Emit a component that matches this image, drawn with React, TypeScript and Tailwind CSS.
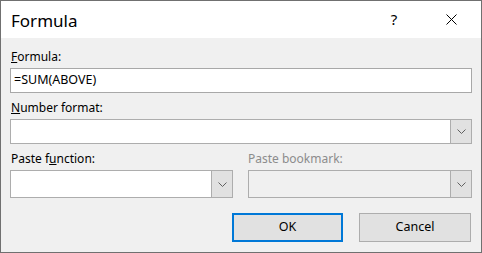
import React from "react";

function Chevron() {
  return (
    <svg width="9" height="5" viewBox="0 0 9 5" className="block">
      <path d="M0.5 0.5 L4.5 4.5 L8.5 0.5" fill="none" stroke="#606060" strokeWidth="1" />
    </svg>
  );
}

function Combo({ disabled = false, tall = false }: { disabled?: boolean; tall?: boolean }) {
  return (
    <div
      className={`flex ${tall ? "h-[28px]" : "h-[25px]"} border border-[#adadad] ${
        disabled ? "bg-[#f0f0f0]" : "bg-white"
      }`}
    >
      <div className="flex-1" />
      <div className="w-[21px] border-l border-[#adadad] bg-[#e1e1e1] flex items-center justify-center">
        <Chevron />
      </div>
    </div>
  );
}

export default function App() {
  return (
    <div
      className="w-[482px] h-[253px] border border-[#707070] bg-[#f0f0f0] flex flex-col text-[12px] text-black"
      style={{ fontFamily: '"Segoe UI", "Noto Sans", sans-serif' }}
    >
      <div className="h-[37px] bg-white flex items-center pl-[10px] shrink-0">
        <div className="flex-1 text-[17px] leading-none pt-[1px]">Formula</div>
        <div className="w-[46px] text-center text-[15px] leading-none mr-[11px]">?</div>
        <div className="w-[46px] flex justify-center mr-[7px]">
          <svg width="11" height="11" viewBox="0 0 11 11">
            <path d="M0.5 0.5 L10.5 10.5 M10.5 0.5 L0.5 10.5" stroke="#000" strokeWidth="1" />
          </svg>
        </div>
      </div>
      <div className="flex-1 flex flex-col px-[9px] pt-[11px]">
        <div className="leading-[16px] pl-[1px]">
          <span className="underline">F</span>ormula:
        </div>
        <div className="mt-[3px] h-[25px] border border-[#a8a8a8] bg-white flex items-center pl-[3px] text-[12.5px]">
          =SUM(ABOVE)
        </div>
        <div className="mt-[7px] leading-[16px] pl-[1px]">
          <span className="underline">N</span>umber format:
        </div>
        <div className="mt-[3px]">
          <Combo />
        </div>
        <div className="mt-[7px] flex gap-[15px]">
          <div className="w-[223px] flex flex-col">
            <div className="leading-[16px] pl-[1px]">
              Paste f<span className="underline">u</span>nction:
            </div>
            <div className="mt-[3px]">
              <Combo tall />
            </div>
          </div>
          <div className="flex-1 flex flex-col">
            <div className="leading-[16px] text-[#8c8c8c]">Paste bookmark:</div>
            <div className="mt-[3px]">
              <Combo disabled tall />
            </div>
          </div>
        </div>
        <div className="mt-[15px] flex justify-end gap-[16px] pr-[1px]">
          <button className="w-[111px] h-[29px] border-2 border-[#0078d7] bg-[#e1e1e1] text-[12.5px]">OK</button>
          <button className="w-[112px] h-[29px] border border-[#adadad] bg-[#e1e1e1] text-[12.5px]">Cancel</button>
        </div>
      </div>
    </div>
  );
}
